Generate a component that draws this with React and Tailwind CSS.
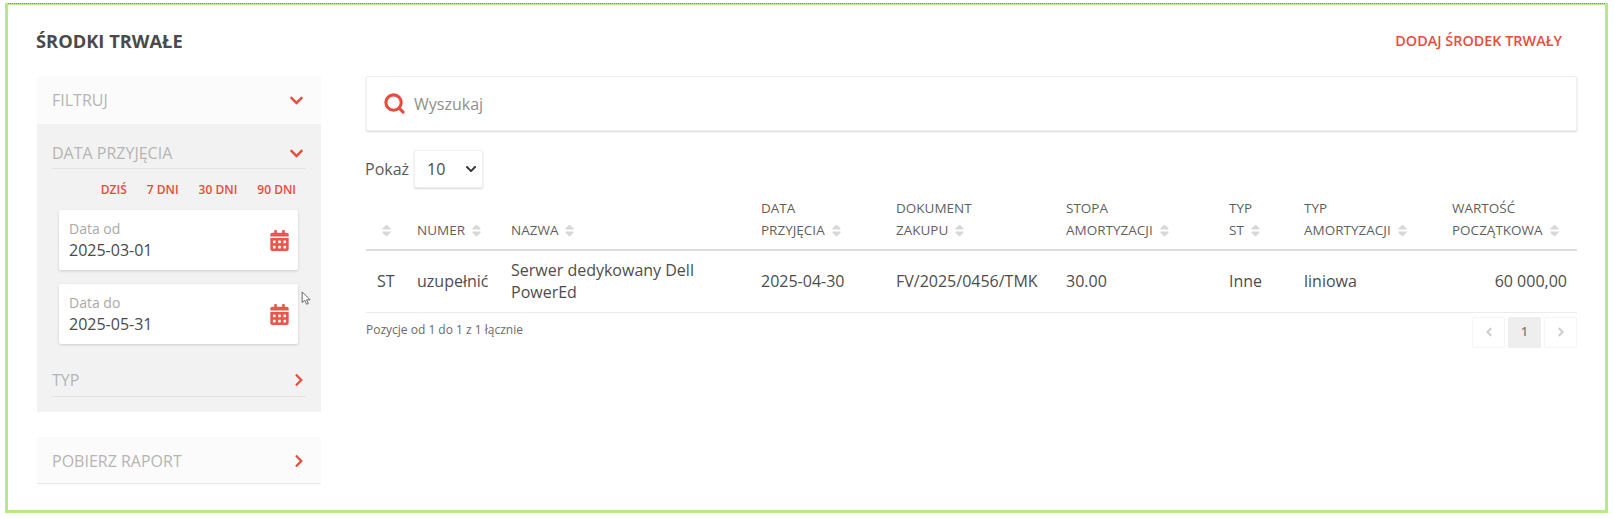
import { FaCalendarAlt, FaChevronDown, FaChevronRight, FaSort, FaAngleLeft, FaAngleRight } from "react-icons/fa";
import { Search } from "lucide-react";

const Sort = () => <FaSort className="inline-block ml-1 text-[#d8d8d8] text-[15px] align-[-3px]" />;

const DateField = ({ label, value }) => (
  <div className="h-[60px] bg-white rounded-[2px] shadow-[0_1px_3px_rgba(0,0,0,0.16)] pl-[10px] pr-[8px] flex items-center justify-between">
    <div>
      <div className="text-[14px] leading-[18px] text-[#a9a9a9] mb-[1px]">{label}</div>
      <div className="text-[16px] leading-[22px] text-[#4a4a4a]">{value}</div>
    </div>
    <FaCalendarAlt className="text-[#e8574a] text-[21px]" />
  </div>
);

const Section = ({ title, open, line, className, children }) => (
  <div className={className}>
    <div className={`mx-[15px] flex items-center justify-between ${line ? "border-b border-[#e4e4e4]" : ""}`}>
      <span className="text-[16px] text-[#b5b5b5] uppercase">{title}</span>
      {open ? (
        <FaChevronDown className="text-[#e74c3c] text-[15px] mr-[2px]" />
      ) : (
        <FaChevronRight className="text-[#e74c3c] text-[14px]" />
      )}
    </div>
    {children}
  </div>
);

const Th = ({ children, className = "" }) => (
  <th className={`px-[10px] pb-[8px] pt-0 align-bottom text-left font-normal text-[13.5px] leading-[21.5px] text-[#5f5f5f] uppercase ${className}`}>
    {children}
  </th>
);

const Td = ({ children, className = "" }) => (
  <td className={`px-[10px] align-middle text-[16px] leading-[22px] text-[#4d4d4d] ${className}`}>{children}</td>
);

export default function App() {
  return (
    <div className="h-[519px] bg-white pt-[3px] pb-[6px] pl-[5px] pr-[6px] font-['Open_Sans',sans-serif] overflow-hidden">
      <div className="relative h-full border-[3px] border-t-[2px] border-[#b5e989] pt-[20px] pl-[29px] pr-[28px]">
        {/* kropkowana linia na górnej krawędzi ramki */}
        <div className="absolute -top-[2px] left-0 right-0 border-t border-dotted border-[#6f9f4a]" />

        <div className="flex items-center justify-between h-[32px] pr-[15px]">
          <h1 className="text-[18.3px] font-bold text-[#4a4a4a] uppercase -ml-[1px]">Środki trwałe</h1>
          <a className="text-[14.4px] font-semibold text-[#e74c3c] uppercase">Dodaj środek trwały</a>
        </div>

        <div className="flex mt-[19px]">
          <aside className="w-[284px] shrink-0">
            <div className="h-[48px] pt-[12px] bg-[#fbfbfb]">
              <Section title="Filtruj" open />
            </div>
            <div className="h-[288px] bg-[#f2f2f2] pt-[14px]">
              <Section title="Data przyjęcia" open line className="[&>div:first-child]:h-[31px]">
                <div className="flex justify-end gap-[20px] pr-[25px] mt-[12px] text-[12px] font-semibold text-[#e74c3c]">
                  <span>DZIŚ</span>
                  <span>7 DNI</span>
                  <span>30 DNI</span>
                  <span>90 DNI</span>
                </div>
                <div className="mx-[22px] w-[239px] mt-[11px] flex flex-col gap-[14px]">
                  <DateField label="Data od" value="2025-03-01" />
                  <DateField label="Data do" value="2025-05-31" />
                </div>
              </Section>
              <Section title="Typ" line className="mt-[20px] [&>div:first-child]:h-[33px]" />
            </div>
            <div className="mt-[25px] h-[47px] bg-[#fbfbfb] border-b border-[#e9e9e9]">
              <Section title="Pobierz raport" className="[&>div:first-child]:h-[47px]" />
            </div>
          </aside>

          <main className="ml-[45px] flex-1 min-w-0">
            <div className="h-[55px] bg-white rounded-[2px] border border-[#efefef] shadow-[0_1px_2px_rgba(0,0,0,0.16)] flex items-center pl-[16px]">
              <Search size={23} strokeWidth={3.2} className="text-[#e74c3c]" />
              <span className="ml-[8px] text-[16px] text-[#8f8f8f]">Wyszukaj</span>
            </div>

            <div className="flex items-center mt-[19px] h-[38px]">
              <span className="text-[16px] text-[#5a5a5a] -ml-[1px]">Pokaż</span>
              <div className="ml-[5px] w-[69px] h-[38px] bg-white rounded-[2px] border border-[#efefef] shadow-[0_1px_2px_rgba(0,0,0,0.16)] flex items-center justify-between pl-[12px] pr-[5px]">
                <span className="text-[16px] text-[#4a4a4a]">10</span>
                <FaChevronDown className="text-[#333] text-[12px]" />
              </div>
            </div>

            <table className="w-[1211px] table-fixed border-collapse mt-[2px]">
              <colgroup>
                <col className="w-[41px]" />
                <col className="w-[94px]" />
                <col className="w-[250px]" />
                <col className="w-[135px]" />
                <col className="w-[170px]" />
                <col className="w-[163px]" />
                <col className="w-[75px]" />
                <col className="w-[148px]" />
                <col className="w-[135px]" />
              </colgroup>
              <thead>
                <tr className="border-b-2 border-[#dcdcdc] h-[60px]">
                  <Th className="!px-[9px]"><Sort /></Th>
                  <Th>Numer<Sort /></Th>
                  <Th>Nazwa<Sort /></Th>
                  <Th>Data<br />przyjęcia<Sort /></Th>
                  <Th>Dokument<br />zakupu<Sort /></Th>
                  <Th>Stopa<br />amortyzacji<Sort /></Th>
                  <Th>Typ<br />ST<Sort /></Th>
                  <Th>Typ<br />amortyzacji<Sort /></Th>
                  <Th>Wartość<br />początkowa<Sort /></Th>
                </tr>
              </thead>
              <tbody>
                <tr className="h-[62px] border-b border-[#ececec]">
                  <Td className="!pl-[11px]">ST</Td>
                  <Td>uzupełnić</Td>
                  <Td>Serwer dedykowany Dell PowerEd</Td>
                  <Td>2025-04-30</Td>
                  <Td>FV/2025/0456/TMK</Td>
                  <Td>30.00</Td>
                  <Td>Inne</Td>
                  <Td>liniowa</Td>
                  <Td className="text-right">60 000,00</Td>
                </tr>
              </tbody>
            </table>

            <div className="flex items-start justify-between mt-[4px]">
              <span className="text-[12px] leading-[26px] text-[#6a6a6a]">Pozycje od 1 do 1 z 1 łącznie</span>
              <div className="flex gap-[3px] text-[#cfcfcf]">
                <div className="w-[33px] h-[31px] border border-dotted border-[#ececec] rounded-[2px] flex items-center justify-center"><FaAngleLeft className="text-[14px]" /></div>
                <div className="w-[33px] h-[31px] bg-[#eeeeee] rounded-[2px] flex items-center justify-center text-[12px] font-semibold text-[#7d7d7d]">1</div>
                <div className="w-[33px] h-[31px] border border-dotted border-[#ececec] rounded-[2px] flex items-center justify-center"><FaAngleRight className="text-[14px]" /></div>
              </div>
            </div>
          </main>
        </div>

        {/* kursor myszy z nagrania */}
        <svg className="absolute left-[293px] top-[286px]" width="12" height="15" viewBox="0 0 13 17">
          <path d="M1 1 L1 13 L4 10.5 L6 15 L8 14 L6 10 L10 10 Z" fill="#fff" stroke="#555" strokeWidth="1" strokeLinejoin="round" />
        </svg>
      </div>
    </div>
  );
}
